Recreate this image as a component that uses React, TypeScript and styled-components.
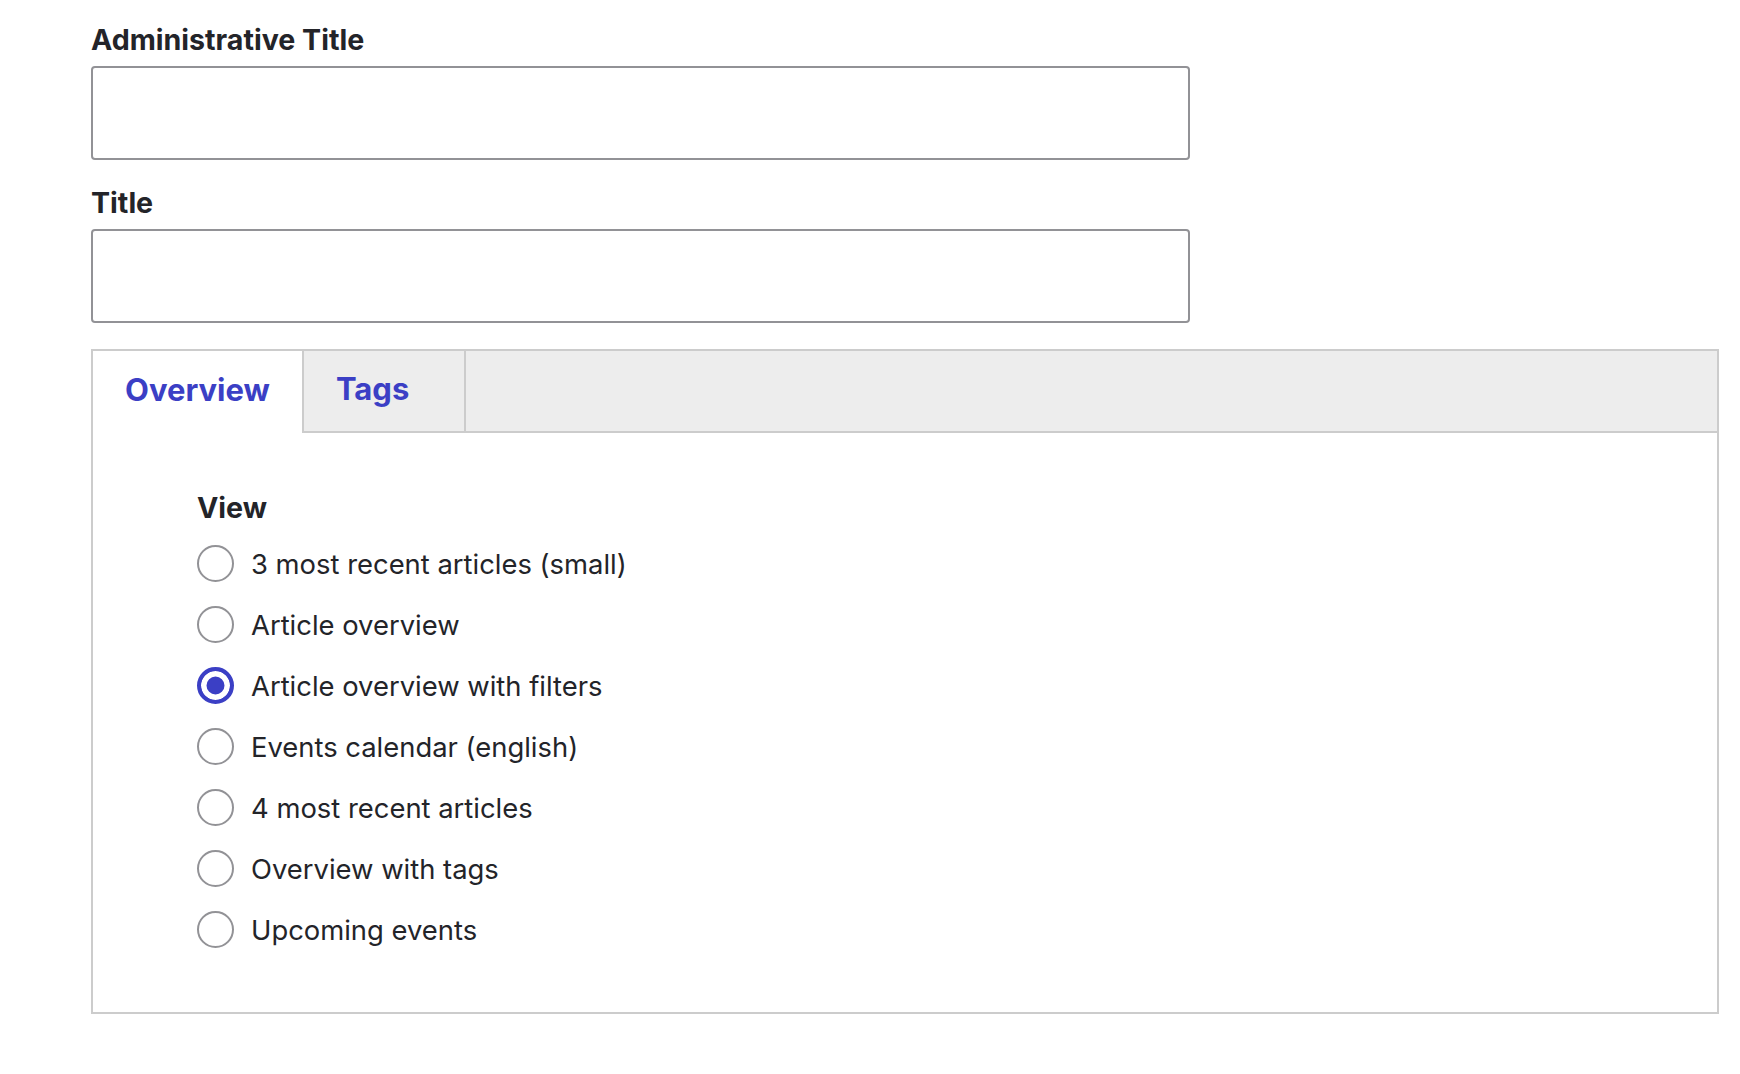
import { useState } from 'react'
import styled, { createGlobalStyle } from 'styled-components'

const VIEWS = [
  '3 most recent articles (small)',
  'Article overview',
  'Article overview with filters',
  'Events calendar (english)',
  '4 most recent articles',
  'Overview with tags',
  'Upcoming events',
]

const TABS = ['Overview', 'Tags']

export default function App() {
  const [tab, setTab] = useState('Overview')
  const [view, setView] = useState('Article overview with filters')

  return (
    <Page>
      <GlobalStyle />
      <Field>
        <Label htmlFor="admin-title">Administrative Title</Label>
        <TextInput id="admin-title" type="text" />
      </Field>
      <Field>
        <Label htmlFor="title">Title</Label>
        <TextInput id="title" type="text" />
      </Field>

      <TabPanel>
        <TabList>
          {TABS.map((name) => (
            <Tab key={name} $active={tab === name} onClick={() => setTab(name)}>
              {name}
            </Tab>
          ))}
        </TabList>
        <PanelBody>
          <ViewFieldset>
            <Legend>View</Legend>
            <RadioList>
              {VIEWS.map((name) => (
                <RadioRow key={name}>
                  <Radio
                    type="radio"
                    name="view"
                    checked={view === name}
                    onChange={() => setView(name)}
                  />
                  {name}
                </RadioRow>
              ))}
            </RadioList>
          </ViewFieldset>
        </PanelBody>
      </TabPanel>
    </Page>
  )
}

const BLUE = '#3b3fc5'
const TEXT = '#232429'

const GlobalStyle = createGlobalStyle`
  html, body {
    margin: 0;
    background: #fff;
  }

  body {
    font-family: Inter, 'Noto Sans', sans-serif;
    color: ${TEXT};
  }
`

const Page = styled.div`
  padding: 22px 21px 40px 91px;
`

const Field = styled.div`
  display: flex;
  flex-direction: column;
  width: 1099px;
  margin-bottom: 25px;

  & + & {
    margin-bottom: 26px;
  }
`

const Label = styled.label`
  font-size: 28.6px;
  font-weight: 700;
  line-height: 36px;
  margin-bottom: 8px;
`

const TextInput = styled.input`
  box-sizing: border-box;
  height: 94px;
  border: 2px solid #929296;
  border-radius: 4px;
  font: inherit;
  font-size: 28px;
  padding: 0 16px;
  outline: none;
`

const TabPanel = styled.div`
  border: 2px solid #cccccc;
`

const TabList = styled.div`
  display: flex;
  height: 80px;
  background: #ededed;
  border-bottom: 2px solid #cccccc;
`

const Tab = styled.button<{ $active?: boolean }>`
  display: flex;
  align-items: center;
  box-sizing: border-box;
  min-width: 162px;
  height: ${(p) => (p.$active ? '82px' : '80px')};
  padding: 0 32px 5px;
  border: 0;
  border-right: 2px solid #cccccc;
  background: ${(p) => (p.$active ? '#fff' : 'transparent')};
  color: ${BLUE};
  font-family: inherit;
  font-size: 31px;
  font-weight: 700;
  cursor: pointer;
`

const PanelBody = styled.div`
  padding: 58px 0 64px 104px;
`

const ViewFieldset = styled.fieldset`
  border: 0;
  margin: 0;
  padding: 0;
`

const Legend = styled.legend`
  padding: 0;
  font-size: 28.6px;
  font-weight: 700;
  line-height: 34px;
  margin-bottom: 20px;
`

const RadioList = styled.div`
  display: flex;
  flex-direction: column;
  gap: 24px;
`

const RadioRow = styled.label`
  display: flex;
  align-items: center;
  gap: 17px;
  height: 37px;
  font-size: 27.4px;
  line-height: 34px;
  cursor: pointer;
`

const Radio = styled.input`
  appearance: none;
  box-sizing: border-box;
  flex: none;
  width: 37px;
  height: 37px;
  margin: 0;
  border: 2px solid #929296;
  border-radius: 50%;
  background: #fff;
  cursor: pointer;

  &:checked {
    border: 4px solid ${BLUE};
    background: ${BLUE};
    box-shadow: inset 0 0 0 5.5px #fff;
  }
`
